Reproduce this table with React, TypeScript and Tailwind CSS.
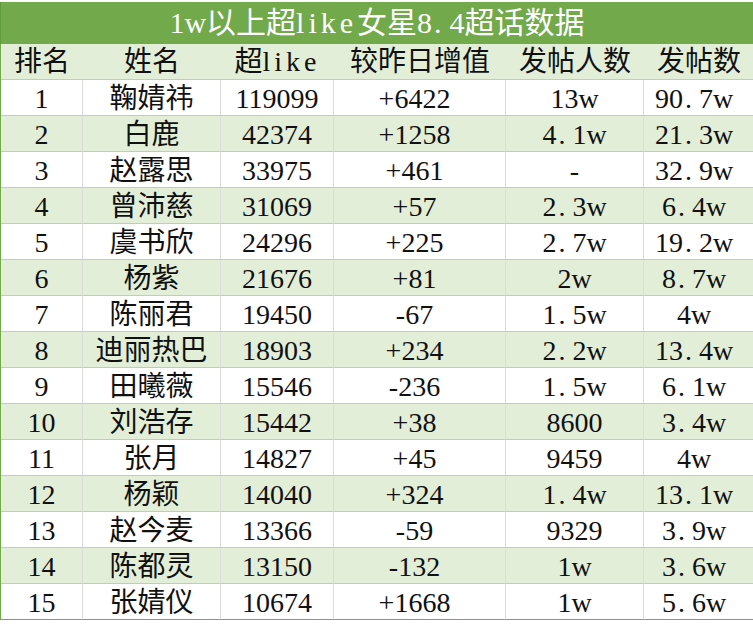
import React from "react";

const rows: string[][] = [
  ["1", "鞠婧祎", "119099", "+6422", "13w", "90.7w"],
  ["2", "白鹿", "42374", "+1258", "4.1w", "21.3w"],
  ["3", "赵露思", "33975", "+461", "-", "32.9w"],
  ["4", "曾沛慈", "31069", "+57", "2.3w", "6.4w"],
  ["5", "虞书欣", "24296", "+225", "2.7w", "19.2w"],
  ["6", "杨紫", "21676", "+81", "2w", "8.7w"],
  ["7", "陈丽君", "19450", "-67", "1.5w", "4w"],
  ["8", "迪丽热巴", "18903", "+234", "2.2w", "13.4w"],
  ["9", "田曦薇", "15546", "-236", "1.5w", "6.1w"],
  ["10", "刘浩存", "15442", "+38", "8600", "3.4w"],
  ["11", "张月", "14827", "+45", "9459", "4w"],
  ["12", "杨颖", "14040", "+324", "1.4w", "13.1w"],
  ["13", "赵今麦", "13366", "-59", "9329", "3.9w"],
  ["14", "陈都灵", "13150", "-132", "1w", "3.6w"],
  ["15", "张婧仪", "10674", "+1668", "1w", "5.6w"],
];

const font = {
  fontFamily: '"Liberation Serif", "Noto Sans CJK SC", serif',
};

function Val({ text }: { text: string }) {
  const i = text.indexOf(".");
  if (i < 0) return <>{text}</>;
  return (
    <>
      {text.slice(0, i)}
      <span className="pl-[2px] pr-[7px]">.</span>
      {text.slice(i + 1)}
    </>
  );
}

export default function App() {
  const headers: React.ReactNode[] = [
    "排名",
    "姓名",
    <>
      超<span className="tracking-[4px]">like</span>
    </>,
    "较昨日增值",
    "发帖人数",
    "发帖数",
  ];
  return (
    <div className="w-[753px] h-[627px] bg-white overflow-hidden text-[#111]" style={font}>
      <div className="mt-[2px] h-[42px] bg-[#71a94b] flex items-center justify-center text-white text-[30px] leading-none border-l border-[#5f9a3b]">
        1w以上超<span className="tracking-[4px]">like</span>女星8<span className="pl-[2px] pr-[8px]">.</span>4超话数据
      </div>
      <div className="grid grid-cols-[82px_138px_113px_172px_138px_110px] border-l border-[#71a94b]">
        {headers.map((h, i) => (
          <div
            key={i}
            className="h-[36px] bg-[#e2eed8] flex items-center justify-center text-[28px] leading-none border-b border-[#c2cdb8]"
          >
            {h}
          </div>
        ))}
        {rows.map((r, ri) =>
          r.map((c, ci) => (
            <div
              key={ri + "-" + ci}
              className={
                "h-[36px] flex items-center justify-center text-[28px] leading-none pt-[3px] border-b " +
                (ri === rows.length - 1 ? "border-[#8a9484] " : "border-[#c2cdb8] ") +
                (ci < 5 ? "border-r border-r-[#dadcd8] " : "") +
                (ri % 2 === 1 ? "bg-[#e2eed8]" : "bg-white") +
                (ci === 3 ? " pr-[10px]" : "") +
                (ci === 5 ? " pr-[10px]" : "")
              }
            >
              <Val text={c} />
            </div>
          ))
        )}
      </div>
    </div>
  );
}
